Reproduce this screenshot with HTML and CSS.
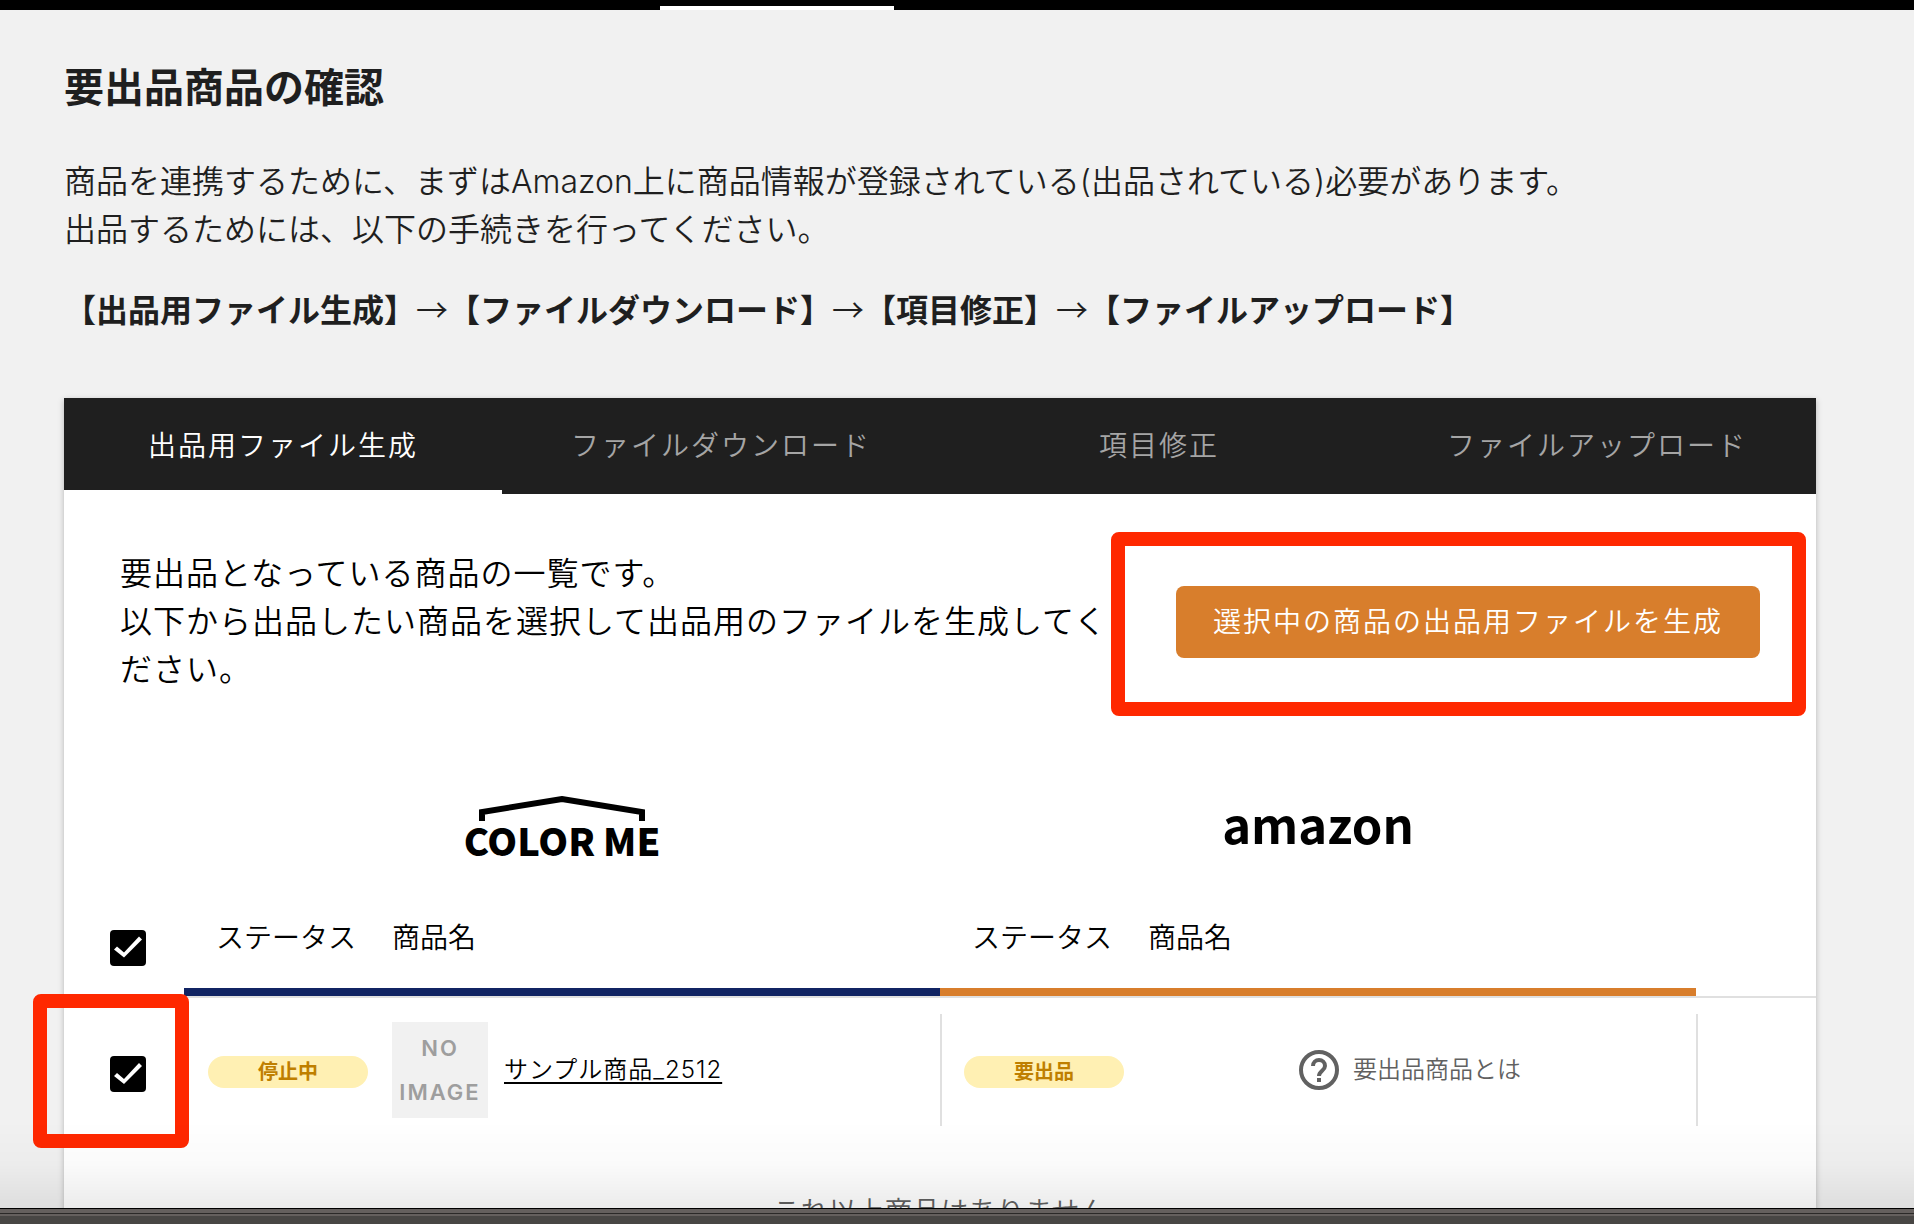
FILE: index.html
```html
<!DOCTYPE html>
<html lang="ja">
<head>
    <meta charset="UTF-8">
    <meta name="viewport" content="width=device-width, initial-scale=1.0">
    <title>要出品商品の確認</title>
    <link rel="stylesheet" href="styles.css">
</head>
<body>
    <header class="top-bar">
        <div class="top-bar-active"></div>
    </header>

    <main class="page">
        <h1>要出品商品の確認</h1>
        <p class="lead">商品を連携するために、まずはAmazon上に商品情報が登録されている(出品されている)必要があります。<br>出品するためには、以下の手続きを行ってください。</p>
        <p class="steps"><strong>【出品用ファイル生成】</strong>→<strong>【ファイルダウンロード】</strong>→<strong>【項目修正】</strong>→<strong>【ファイルアップロード】</strong></p>

        <section class="card">
            <nav class="tabs">
                <a href="#generate" class="tab active">出品用ファイル生成</a>
                <a href="#download" class="tab">ファイルダウンロード</a>
                <a href="#fix" class="tab">項目修正</a>
                <a href="#upload" class="tab">ファイルアップロード</a>
            </nav>

            <div class="intro">
                <p>要出品となっている商品の一覧です。<br>以下から出品したい商品を選択して出品用のファイルを生成してください。</p>
                <div class="intro-action">
                    <button type="button" class="generate-button">選択中の商品の出品用ファイルを生成</button>
                    <span class="marker marker-button"></span>
                </div>
            </div>

            <table class="products">
                <colgroup>
                    <col class="col-side">
                    <col class="col-shop">
                    <col class="col-shop">
                    <col class="col-side">
                </colgroup>
                <thead>
                    <tr class="logo-row">
                        <td></td>
                        <th>
                            <div class="colorme">
                                <svg class="colorme-roof" viewBox="0 0 166 25" aria-hidden="true">
                                    <path d="M3 25V16L83 3L163 16V25" fill="none" stroke="#000" stroke-width="6"/>
                                </svg>
                                <span class="colorme-name"><span>COLOR</span> <span>ME</span></span>
                            </div>
                        </th>
                        <th><span class="amazon">amazon</span></th>
                        <td></td>
                    </tr>
                    <tr class="label-row">
                        <td class="check-cell"><input type="checkbox" class="check" aria-label="すべて選択" checked></td>
                        <th class="shop-colorme">
                            <div class="labels"><span>ステータス</span><span>商品名</span></div>
                        </th>
                        <th class="shop-amazon">
                            <div class="labels"><span>ステータス</span><span>商品名</span></div>
                        </th>
                        <td></td>
                    </tr>
                </thead>
                <tbody>
                    <tr>
                        <td class="check-cell">
                            <input type="checkbox" class="check" aria-label="サンプル商品_2512" checked>
                            <span class="marker marker-check"></span>
                        </td>
                        <td>
                            <div class="item">
                                <span class="badge">停止中</span>
                                <div class="product">
                                    <span class="no-image">NO IMAGE</span>
                                    <a href="#item" class="product-name">サンプル商品_2512</a>
                                </div>
                            </div>
                        </td>
                        <td>
                            <div class="item item-split">
                                <span class="badge">要出品</span>
                                <a href="#help" class="help">
                                    <svg viewBox="0 0 40 40" aria-hidden="true">
                                        <circle cx="20" cy="20" r="18" fill="none" stroke="#616161" stroke-width="4"/>
                                        <path d="M14 16a6 6 0 0 1 12 0c0 4.600-6 5-6 10" fill="none" stroke="#616161" stroke-width="4"/>
                                        <path d="M18 28h4v4h-4z" fill="#616161"/>
                                    </svg>
                                    要出品商品とは
                                </a>
                            </div>
                        </td>
                        <td>
                            <div class="item item-split"></div>
                        </td>
                    </tr>
                </tbody>
            </table>

            <p class="no-more">これ以上商品はありません</p>
        </section>
    </main>

    <footer class="dock"></footer>
</body>
</html>
```
FILE: styles.css
```css
* {
    box-sizing: border-box;
}

body {
    margin: 0;
    height: 100vh;
    overflow: hidden;
    background-color: #f1f1f1;
    color: #1f1f1f;
    font-family: Inter, "Noto Sans CJK JP", sans-serif;
    font-size: 32px;
    font-weight: 350;
    line-height: 48px;
}

h1,
p {
    margin: 0;
}

.top-bar {
    display: flex;
    align-items: flex-end;
    height: 10px;
    padding-left: 660px;
    background-color: #000;
}

.top-bar-active {
    width: 234px;
    height: 4px;
    background-color: #fff;
}

.page {
    padding: 46px 98px 0 64px;
}

.page h1 {
    margin-bottom: 38px;
    font-size: 40px;
    font-weight: 700;
    line-height: 64px;
}

.lead {
    margin-bottom: 30px;
}

.steps {
    margin-bottom: 66px;
    font-family: "Noto Sans CJK JP", sans-serif;
}

.steps strong {
    font-weight: 700;
}

.card {
    background-color: #fff;
    color: #000;
    box-shadow: 0 2px 6px rgba(0, 0, 0, 0.25);
}

/* Tabs */
.tabs {
    display: grid;
    grid-template-columns: repeat(4, 1fr);
    background-color: #1f1f1f;
}

.tab {
    height: 96px;
    border-bottom: 4px solid transparent;
    color: #a5a5a5;
    font-size: 28px;
    letter-spacing: 2px;
    line-height: 96px;
    text-align: center;
    text-decoration: none;
}

.tab.active {
    border-color: #fff;
    color: #fff;
}

/* Text and button above the list */
.intro {
    display: flex;
    align-items: center;
    gap: 48px;
    padding: 56px;
}

.intro p {
    flex: 1;
    letter-spacing: 1px;
}

.intro-action {
    position: relative;
}

.generate-button {
    display: block;
    height: 72px;
    padding: 0 37px 4px;
    border: none;
    border-radius: 8px;
    background-color: #d87e2c;
    color: #fff;
    font-family: inherit;
    font-size: 28px;
    font-weight: inherit;
    letter-spacing: 2px;
    cursor: pointer;
}

.marker {
    position: absolute;
    border: 14px solid #ff2800;
    border-radius: 8px;
    pointer-events: none;
}

.marker-button {
    inset: -54px -46px -58px -65px;
}

.marker-check {
    inset: -4px -5px -6px -31px;
}

/* Product list */
.products {
    width: 100%;
    border-collapse: collapse;
    table-layout: fixed;
}

.products th,
.products td {
    padding: 0;
    font-weight: inherit;
}

.col-side {
    width: 120px;
}

.logo-row {
    height: 143px;
}

.products .logo-row th {
    padding-top: 12px;
}

.colorme {
    display: flex;
    flex-direction: column;
    align-items: center;
}

.colorme-roof {
    width: 166px;
    height: 25px;
}

.colorme-name {
    display: flex;
    gap: 8px;
    font-family: "Noto Sans CJK JP", sans-serif;
    font-size: 38px;
    font-weight: 900;
    line-height: 38px;
}

.amazon {
    font-family: "Noto Sans CJK JP", sans-serif;
    font-size: 49px;
    font-weight: 700;
}

.label-row {
    height: 104px;
    border-bottom: 2px solid #e0e0e0;
}

.check-cell {
    position: relative;
    text-align: center;
}

.check {
    appearance: none;
    display: block;
    width: 36px;
    height: 36px;
    margin: 8px 0 0 46px;
    border-radius: 4px;
    background-color: #000;
}

.check:checked::before {
    content: "";
    display: block;
    width: 36px;
    height: 36px;
    background-color: #fff;
    clip-path: polygon(4px 20px, 7px 17px, 14px 23px, 29px 7px, 32px 10px, 14px 28px);
}

.label-row .check {
    margin-top: 6px;
}

.labels {
    display: flex;
    height: 102px;
    padding: 20px 24px 0 32px;
    border-bottom: 8px solid;
    font-size: 28px;
}

.labels span:first-child {
    width: 176px;
    text-align: left;
}

.shop-colorme .labels {
    border-color: #112463;
}

.shop-amazon .labels {
    border-color: #d87e2c;
}

.labels span {
    line-height: 48px;
}

.item {
    display: flex;
    align-items: center;
    height: 112px;
    margin: 16px 0;
    padding-left: 24px;
    font-size: 24px;
}

.item-split {
    padding-left: 22px;
    border-left: 2px solid #e0e0e0;
}

.badge {
    width: 160px;
    margin-top: 4px;
    border-radius: 16px;
    background-color: #fff0b3;
    color: #bf7f00;
    font-size: 20px;
    font-weight: 700;
    line-height: 32px;
    text-align: center;
}

.product {
    display: flex;
    align-items: center;
    gap: 16px;
    margin-left: 24px;
}

.no-image {
    width: 96px;
    height: 96px;
    padding: 4px 0;
    background-color: #f1f1f1;
    color: #9e9e9e;
    font-size: 22px;
    font-weight: 600;
    letter-spacing: 2px;
    line-height: 44px;
    text-align: center;
}

.product-name {
    color: #000;
    letter-spacing: 1px;
    text-underline-offset: 4px;
    text-decoration-thickness: 2px;
    text-decoration-skip-ink: none;
}

.help {
    display: flex;
    flex: 1;
    align-items: center;
    justify-content: center;
    gap: 14px;
    color: #616161;
    text-decoration: none;
}

.help svg {
    width: 40px;
    height: 40px;
}

.no-more {
    padding: 46px 0 56px;
    color: #616161;
    font-size: 28px;
    text-align: center;
}

/* Bottom edge of the window */
.dock {
    position: fixed;
    right: 0;
    bottom: 0;
    left: 0;
    height: 16px;
    border-top: 1px solid #000;
    background: linear-gradient(#65605e 4px, #2b2928 4px, #2b2928 5px, #65605e 5px, #65605e 7px, #484644 7px);
}

.dock::before {
    content: "";
    position: absolute;
    right: 0;
    bottom: 100%;
    left: 0;
    height: 88px;
    background: linear-gradient(rgba(0, 0, 0, 0), rgba(0, 0, 0, 0.02) 50%, rgba(0, 0, 0, 0.08));
}
```
